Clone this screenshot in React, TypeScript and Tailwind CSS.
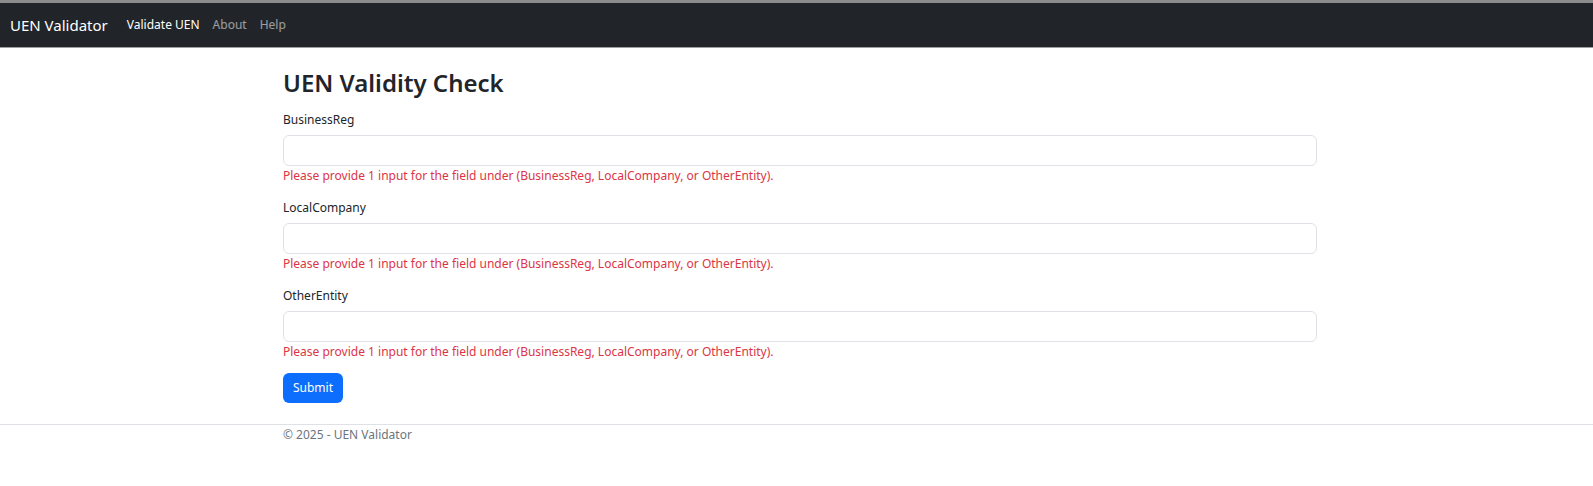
const fields = ["BusinessReg", "LocalCompany", "OtherEntity"];

const errorText =
  "Please provide 1 input for the field under (BusinessReg, LocalCompany, or OtherEntity).";

const App = () => {
  return (
    <div className="min-h-[486px] bg-white font-['Noto_Sans',sans-serif] text-[12px] text-[#212529]">
      {/* navbar */}
      <nav className="border-t-[3px] border-b border-t-[#8c8c8c] border-b-[#9e9e9e] bg-[#212529]">
        <div className="flex h-[44px] items-center px-[10px]">
          <span className="text-[15px] leading-none text-white">UEN Validator</span>
          <ul className="ml-[19px] flex items-center gap-[13px] text-[12px]">
            <li className="text-white">Validate UEN</li>
            <li className="text-white/55">About</li>
            <li className="text-white/55">Help</li>
          </ul>
        </div>
      </nav>

      <main className="pl-[283px] pr-[276px]">
        <h1 className="mt-[19px] h-[32px] text-[24px] leading-[32px] font-semibold">
          UEN Validity Check
        </h1>
        <form className="mt-[10px] flex flex-col">
          {fields.map((name, i) => (
            <div key={name} className={i > 0 ? "mt-[11px]" : ""}>
              <label className="block h-[21px] leading-[21px]">{name}</label>
              <input
                type="text"
                className="mt-[5px] block h-[31px] w-full rounded-[6px] border border-[#dee2e6] px-2 outline-none"
              />
              <div className="h-[20px] leading-[20px] text-[#dc3545]">{errorText}</div>
            </div>
          ))}
          <div className="mt-[11px]">
            <button
              type="button"
              className="h-[30px] w-[60px] rounded-[6px] bg-[#0d6efd] text-[12px] text-white"
            >
              Submit
            </button>
          </div>
        </form>
      </main>

      <footer className="mt-[21px] border-t border-[#dee2e6]">
        <div className="pl-[283px] leading-[20px] text-[#6c757d]">© 2025 - UEN Validator</div>
      </footer>
    </div>
  );
};

export default App;
